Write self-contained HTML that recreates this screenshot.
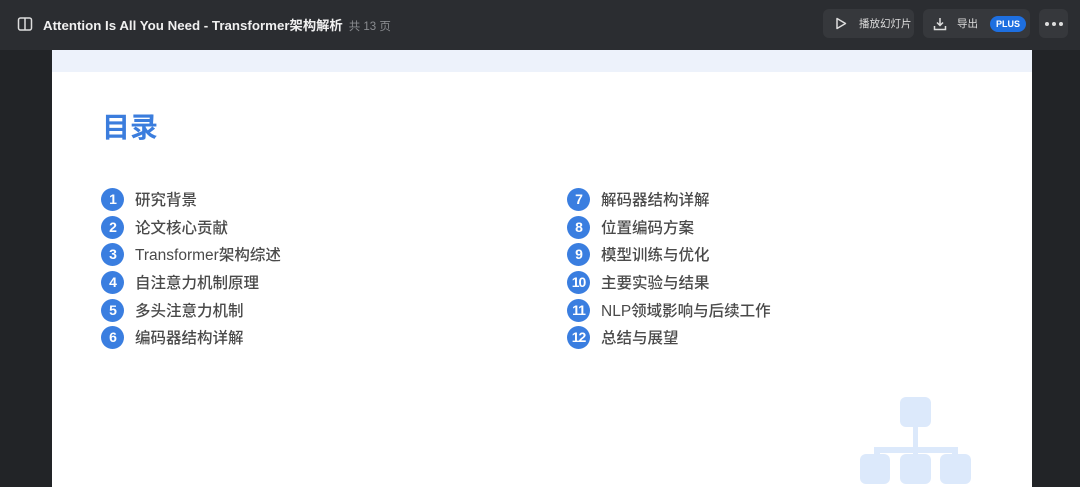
<!DOCTYPE html>
<html><head><meta charset="utf-8"><style>
*{margin:0;padding:0;box-sizing:border-box}
body{width:1080px;height:487px;overflow:hidden;background:#222427;font-family:"Liberation Sans","Noto Sans CJK SC",sans-serif;position:relative}
.top{position:absolute;left:0;top:0;width:1080px;height:50px;background:#2b2d31}
.title{position:absolute;left:43px;top:15px;color:#f0f0f0;font-size:13.3px;font-weight:bold;white-space:nowrap}
.title span{color:#8a8c90;font-weight:normal;font-size:11.5px;margin-left:6px}
.btn{position:absolute;top:9px;height:29px;background:#36383c;border-radius:6px;color:#ddd;font-size:10.5px;display:flex;align-items:center}
.slide{position:absolute;left:52px;top:50px;width:980px;height:437px;background:#fff}
.band{position:absolute;left:0;top:0;width:980px;height:22px;background:#edf2fb}
h1{position:absolute;left:50px;top:56px;font-size:28px;color:#3b7ddd;font-weight:bold;font-family:"Noto Sans CJK SC",sans-serif}
.item{position:absolute;height:24px;display:flex;align-items:center;font-size:15.5px;color:#4a4a4a;font-family:"Liberation Sans","Noto Sans CJK SC",sans-serif;white-space:nowrap;font-weight:500}
.c{width:23px;height:23px;border-radius:50%;background:#3a7ee0;color:#fff;font-weight:bold;font-size:14px;display:flex;align-items:center;justify-content:center;margin-right:11px;letter-spacing:-1px}
.b{position:absolute;background:#dce9fb;border-radius:6px}
.d{width:4px;height:4px;border-radius:50%;background:#ddd;margin:0 1.5px}
</style></head><body>
<div class="top">
<svg style="position:absolute;left:17px;top:16px" width="16" height="16" viewBox="0 0 16 16" fill="none" stroke="#ddd" stroke-width="1.5"><rect x="1.5" y="2" width="13" height="12" rx="2"/><line x1="8" y1="2" x2="8" y2="14"/></svg>
<div class="title">Attention Is All You Need - Transformer架构解析<span>共 13 页</span></div>
<div class="btn" style="left:823px;width:91px"><svg style="margin:0 12px 0 12px" width="12" height="13" viewBox="0 0 12 13" fill="none" stroke="#ddd" stroke-width="1.5"><path d="M2 1.5 L10.5 6.5 L2 11.5 Z" stroke-linejoin="round"/></svg>播放幻灯片</div>
<div class="btn" style="left:923px;width:107px"><svg style="margin:0 10px 0 10px" width="14" height="14" viewBox="0 0 14 14" fill="none" stroke="#ddd" stroke-width="1.5"><path d="M7 1v7M4 5.5l3 3 3-3M1.5 9v3.5h11V9"/></svg>导出<span style="margin-left:12px;background:#1e6fe0;color:#fff;font-weight:bold;font-size:9px;border-radius:9px;padding:3px 6px">PLUS</span></div>
<div class="btn" style="left:1039px;width:29px;justify-content:center"><div class="d"></div><div class="d"></div><div class="d"></div></div>
</div>
<div class="slide">
<div class="band"></div>
<h1>目录</h1>
<div class="item" style="left:49px;top:137px"><div class="c">1</div>研究背景</div>
<div class="item" style="left:49px;top:165px"><div class="c">2</div>论文核心贡献</div>
<div class="item" style="left:49px;top:192px"><div class="c">3</div>Transformer架构综述</div>
<div class="item" style="left:49px;top:220px"><div class="c">4</div>自注意力机制原理</div>
<div class="item" style="left:49px;top:248px"><div class="c">5</div>多头注意力机制</div>
<div class="item" style="left:49px;top:275px"><div class="c">6</div>编码器结构详解</div>
<div class="item" style="left:515px;top:137px"><div class="c">7</div>解码器结构详解</div>
<div class="item" style="left:515px;top:165px"><div class="c">8</div>位置编码方案</div>
<div class="item" style="left:515px;top:192px"><div class="c">9</div>模型训练与优化</div>
<div class="item" style="left:515px;top:220px"><div class="c">10</div>主要实验与结果</div>
<div class="item" style="left:515px;top:248px"><div class="c">11</div>NLP领域影响与后续工作</div>
<div class="item" style="left:515px;top:275px"><div class="c">12</div>总结与展望</div>
<div class="b" style="left:848px;top:347px;width:31px;height:30px"></div>
<div class="b" style="left:861px;top:376px;width:5px;height:30px;border-radius:0"></div>
<div class="b" style="left:822px;top:397px;width:83px;height:6px;border-radius:3px"></div>
<div class="b" style="left:822px;top:397px;width:6px;height:10px;border-radius:0"></div>
<div class="b" style="left:900px;top:397px;width:6px;height:10px;border-radius:0"></div>
<div class="b" style="left:808px;top:404px;width:30px;height:30px"></div>
<div class="b" style="left:848px;top:404px;width:31px;height:30px"></div>
<div class="b" style="left:888px;top:404px;width:31px;height:30px"></div>
</div>
</body></html>
